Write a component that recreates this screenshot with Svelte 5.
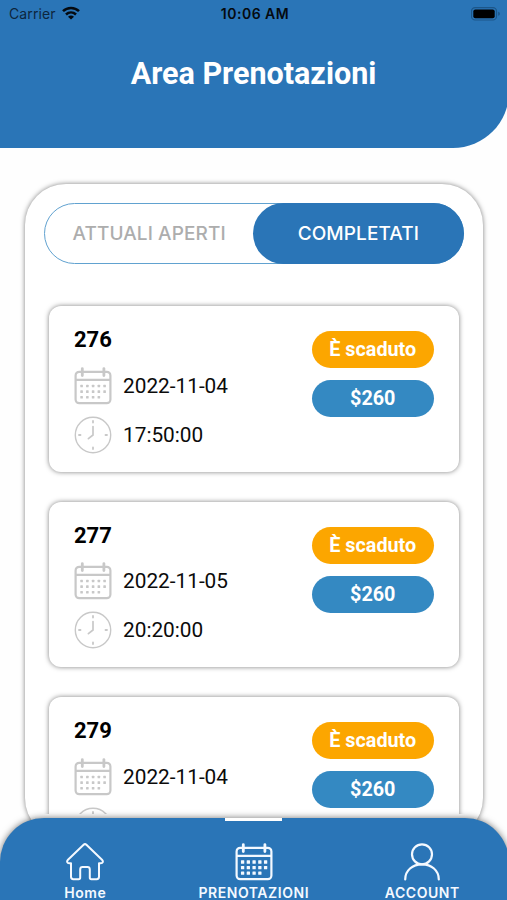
<script>
  const bookings = [
    { id: 276, date: "2022-11-04", time: "17:50:00", status: "È scaduto", price: "$260" },
    { id: 277, date: "2022-11-05", time: "20:20:00", status: "È scaduto", price: "$260" },
    { id: 279, date: "2022-11-04", time: null, status: "È scaduto", price: "$260" }
  ];

  let completed = $state(true);

  const dotRows = [
    { y: 19, count: 5 },
    { y: 24.6, count: 5 },
    { y: 30.2, count: 4 }
  ];
</script>

{#snippet calendar(dot)}
  <svg class="icon" width="38" height="38" viewBox="0 0 38 38" fill="none" stroke="currentColor" stroke-width="2.2">
    <rect x="1.6" y="4.8" width="34.8" height="31.4" rx="3.6"></rect>
    <path d="M1.6 12.8h34.8"></path>
    <path d="M8.3 1.6v7M29.9 1.6v7" stroke-width="2.8" stroke-linecap="round"></path>
    {#each dotRows as row}
      {#each Array(row.count) as _, i}
        <rect x={7.6 + i * 5.75 - dot / 2} y={row.y - dot / 2} width={dot} height={dot} rx="0.5" fill="currentColor" stroke="none"></rect>
      {/each}
    {/each}
  </svg>
{/snippet}

<div class="screen">
  <header class="header">
    <div class="status-bar">
      <div class="carrier">
        <span>Carrier</span>
        <svg width="18" height="14" viewBox="0 0 18 14" fill="none" stroke="#050a10" stroke-width="2.5">
          <path d="M1 5.2C5.4 .8 12.6 .8 17 5.2"></path>
          <path d="M4 8.5c2.9-2.8 7.1-2.8 10 0"></path>
          <path d="M9 13.6 6 10.7c1.7-1.5 4.3-1.5 6 0Z" fill="#050a10" stroke="none"></path>
        </svg>
      </div>
      <span class="clock">10:06 AM</span>
      <svg class="battery" width="30" height="14" viewBox="0 0 30 14">
        <rect x=".5" y=".6" width="25" height="12.4" rx="3.6" fill="none" stroke="#1c5689" stroke-width="1.2"></rect>
        <rect x="2.3" y="2.4" width="21.4" height="8.8" rx="2" fill="#000"></rect>
        <path d="M27.2 4.8c2.2.6 2.2 3.4 0 4Z" fill="#1c5689"></path>
      </svg>
    </div>
    <h1>Area Prenotazioni</h1>
  </header>

  <main class="panel">
    <div class="tabs">
      <button class="tab" class:active={!completed} onclick={() => (completed = false)}>ATTUALI APERTI</button>
      <button class="tab" class:active={completed} onclick={() => (completed = true)}>COMPLETATI</button>
    </div>

    <div class="list">
      {#each bookings as booking (booking.id)}
        <article class="card">
          <div class="info">
            <h2>{booking.id}</h2>
            <div class="row">
              {@render calendar(2.6)}
              <span>{booking.date}</span>
            </div>
            <div class="row">
              <svg class="icon" width="38" height="38" viewBox="0 0 38 38" fill="none" stroke="currentColor" stroke-width="1.4" stroke-linecap="round">
                <circle cx="19" cy="19" r="17.7"></circle>
                <path d="M19 10.500v8.500l-4.600 3.700" stroke-width="1.7"></path>
                <path d="M19 5v1.500M19 31.500v1.500M5 19h1.500M31.500 19h1.500" stroke-width="1.8"></path>
              </svg>
              {#if booking.time}
                <span>{booking.time}</span>
              {/if}
            </div>
          </div>
          <div class="badges">
            <span class="badge expired">{booking.status}</span>
            <span class="badge price">{booking.price}</span>
          </div>
        </article>
      {/each}
    </div>
  </main>

  <nav class="nav">
    <a class="nav-item" href="#home">
      <svg width="38" height="38" viewBox="0 0 38 38" fill="none" stroke="currentColor" stroke-width="2" stroke-linejoin="round" stroke-linecap="round">
        <path d="M17.6 1.8a2 2 0 0 1 2.8 0L36 16.7c1.6 1.6.8 3.5-1.2 3.5H33v13.6c0 1.6-.8 2.4-2.4 2.4h-5.2c-1 0-1.6-.6-1.6-1.6v-8.2c0-1.6-.8-2.4-2.4-2.4h-4.8c-1.6 0-2.4.8-2.4 2.4v8.2c0 1-.6 1.6-1.6 1.6H7.4C5.8 36.2 5 35.4 5 33.8V20.2H3.2c-2 0-2.800-1.900-1.200-3.500Z"></path>
      </svg>
      <span>Home</span>
    </a>
    <a class="nav-item current" href="#prenotazioni">
      {@render calendar(3.3)}
      <span>PRENOTAZIONI</span>
    </a>
    <a class="nav-item" href="#account">
      <svg width="38" height="38" viewBox="0 0 38 38" fill="none" stroke="currentColor" stroke-width="2.2" stroke-linecap="round">
        <circle cx="19" cy="11.3" r="10"></circle>
        <path d="M2.2 36.4C2.2 27.5 9.5 21.3 19 21.3s16.8 6.2 16.8 15.1"></path>
      </svg>
      <span>ACCOUNT</span>
    </a>
  </nav>
</div>

<style>
  :global(body) {
    margin: 0;
    background: #fff;
    overflow: hidden;
  }

  .screen {
    display: flex;
    flex-direction: column;
    width: 507px;
    height: 900px;
    overflow: hidden;
    background: #fefefe;
    font-family: Roboto, "Liberation Sans", sans-serif;
    color: #0b0b0b;
  }

  .header {
    flex: none;
    box-sizing: border-box;
    width: 509px;
    height: 147.5px;
    background: #2a75b7;
    border-bottom-right-radius: 56px;
  }

  .status-bar {
    display: grid;
    grid-template-columns: 1fr auto 1fr;
    align-items: center;
    height: 27px;
    padding: 0 8px 0 9px;
    font-family: Inter, "Liberation Sans", sans-serif;
    font-size: 14px;
    color: #050a10;
  }

  .carrier {
    display: flex;
    align-items: center;
    gap: 6px;
    color: #0d263d;
    letter-spacing: 0.1px;
  }

  .carrier svg {
    margin-top: -2px;
  }

  .clock {
    font-weight: 600;
    letter-spacing: 0.5px;
  }

  .battery {
    justify-self: end;
  }

  h1 {
    margin: 29px 2px 0 0;
    font-size: 30.5px;
    line-height: 36px;
    font-weight: 700;
    text-align: center;
    color: #fff;
  }

  .panel {
    flex: none;
    box-sizing: border-box;
    width: 458px;
    height: 655px;
    margin: 36.5px 0 0 25px;
    padding: 18.5px 0 0;
    border-radius: 41px;
    background: #fff;
    box-shadow: 0 0 5px rgba(0, 0, 0, 0.5);
  }

  .tabs {
    display: flex;
    box-sizing: border-box;
    height: 61px;
    margin: 0 19px 0 18.5px;
    border: 1.5px solid #61a2d0;
    border-radius: 31px;
  }

  .tab {
    flex: 1;
    margin: -1px;
    padding: 0;
    border: 0;
    border-radius: 31px;
    background: none;
    font-family: Inter, "Liberation Sans", sans-serif;
    font-size: 19px;
    font-weight: 500;
    letter-spacing: 0.1px;
    color: #adadad;
  }

  .tab.active {
    background: #2a75b7;
    color: #fff;
  }

  .list {
    display: flex;
    flex-direction: column;
    gap: 30px;
    height: 516px;
    margin-top: 34.5px;
    padding: 8px 24px 0;
    box-sizing: border-box;
    overflow: hidden;
  }

  .card {
    flex: none;
    display: flex;
    justify-content: space-between;
    box-sizing: border-box;
    height: 165.5px;
    padding: 25px 25px 0 24.5px;
    border-radius: 12px;
    background: #fff;
    box-shadow: 0 0 5px rgba(0, 0, 0, 0.5);
  }

  h2 {
    margin: -3px 0 14.5px 0.5px;
    font-size: 22px;
    line-height: 24px;
    font-weight: 700;
    color: #000;
  }

  .row {
    display: flex;
    align-items: center;
    gap: 11.5px;
    height: 38px;
    margin-bottom: 11px;
    font-size: 20.8px;
  }

  .icon {
    flex: none;
  }

  .row .icon {
    color: #c8c8c8;
  }

  .badges {
    display: flex;
    flex-direction: column;
    gap: 12px;
  }

  .badge {
    width: 122.5px;
    height: 37px;
    border-radius: 19px;
    font-size: 19.8px;
    line-height: 37px;
    font-weight: 700;
    text-align: center;
    color: #fff;
  }

  .expired {
    background: #fca600;
  }

  .price {
    background: #3489c2;
  }

  .nav {
    position: relative;
    flex: none;
    display: grid;
    grid-template-columns: repeat(3, 168.5px);
    box-sizing: border-box;
    width: 509px;
    height: 84px;
    margin-top: -21px;
    padding-left: 1px;
    border-radius: 44px 44px 0 0;
    background: #2a75b7;
    box-shadow: 0 0 7px rgba(0, 0, 0, 0.55);
  }

  .nav-item {
    position: relative;
    display: flex;
    flex-direction: column;
    align-items: center;
    padding-top: 24.5px;
    font-family: Inter, "Liberation Sans", sans-serif;
    font-size: 14px;
    line-height: 17px;
    font-weight: 600;
    letter-spacing: 0.55px;
    text-decoration: none;
    color: #f4f9ff;
  }

  .nav-item span {
    margin-top: 3px;
  }

  .nav-item.current::before {
    content: "";
    position: absolute;
    top: 0;
    width: 57px;
    height: 3px;
    background: #fff;
  }
</style>
